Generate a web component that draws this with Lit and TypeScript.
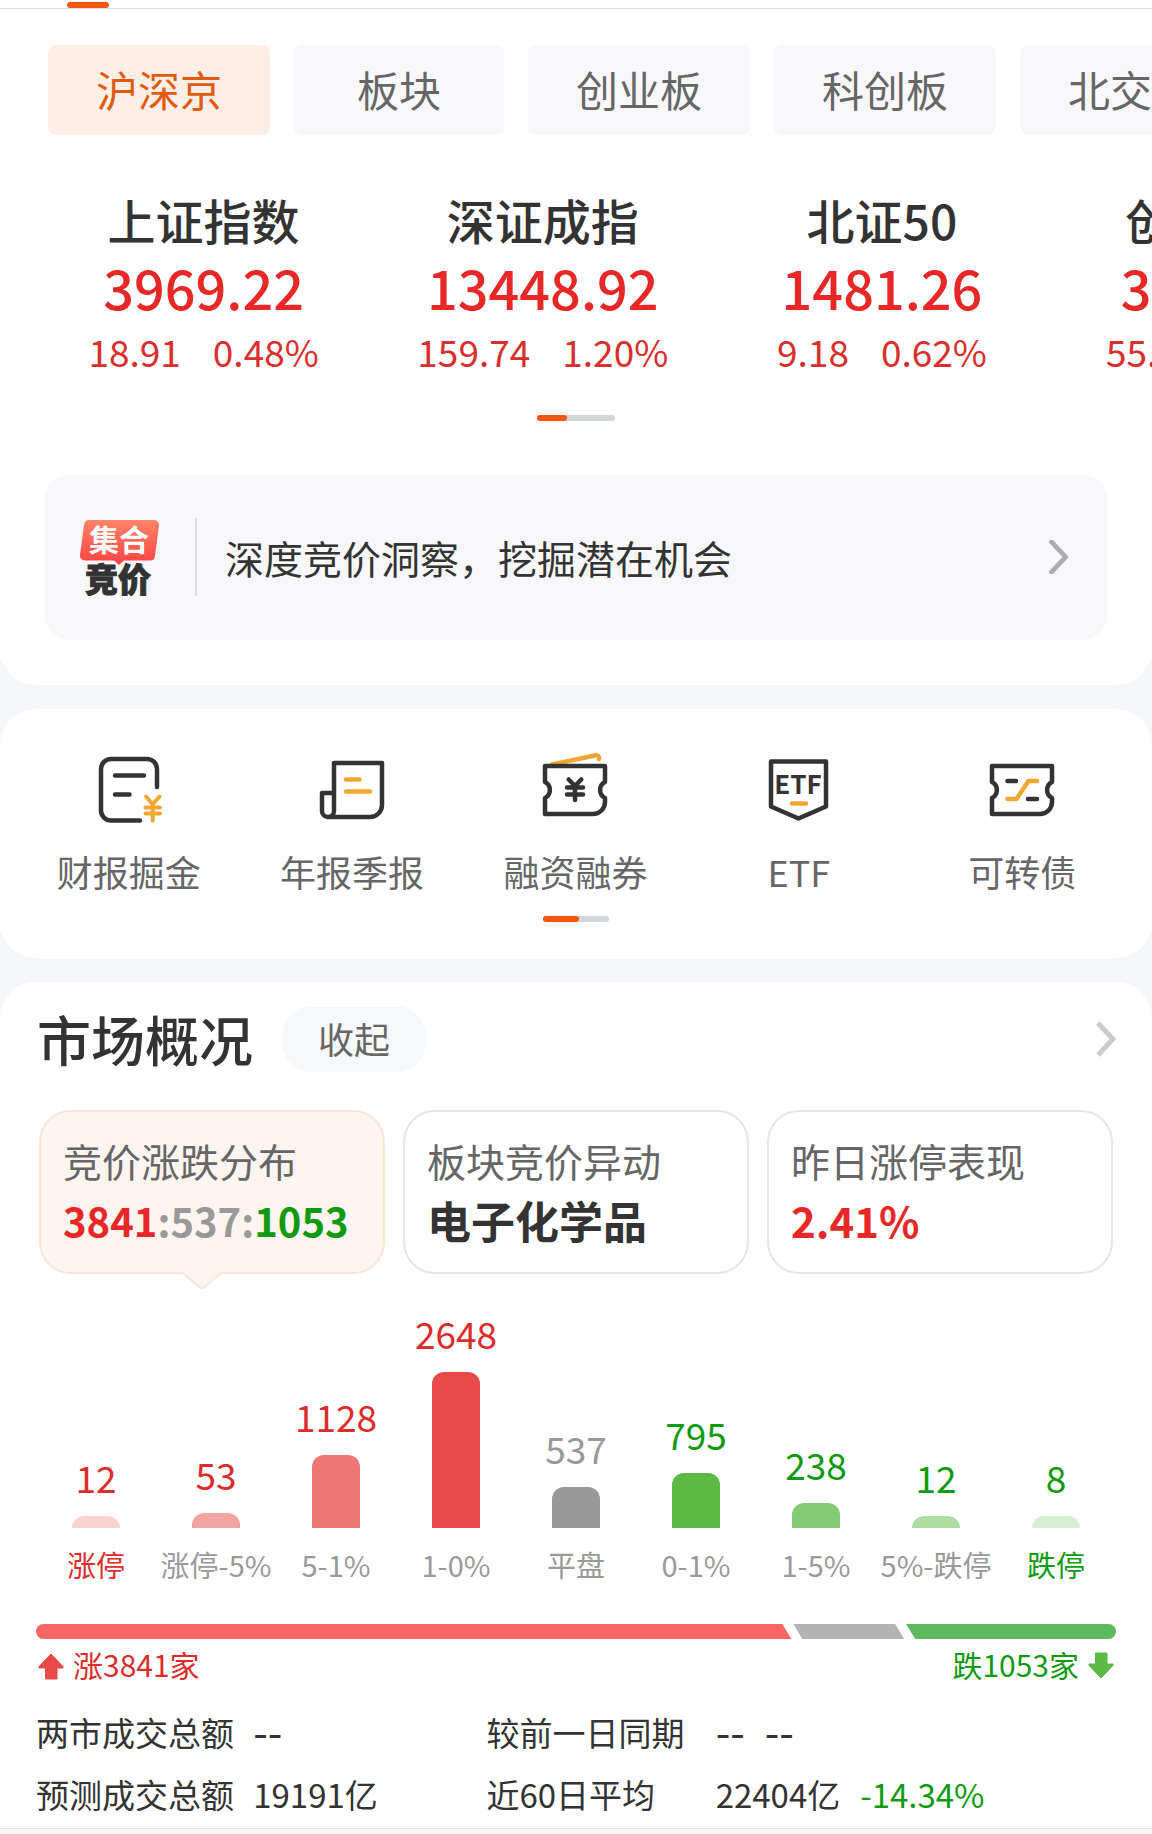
import { LitElement, html, css, svg } from "lit";
import { customElement, state } from "lit/decorators.js";
import { classMap } from "lit/directives/class-map.js";
import { styleMap } from "lit/directives/style-map.js";

const BOARDS = ["沪深京", "板块", "创业板", "科创板", "北交所"];

const INDICES = [
  { name: "上证指数", value: "3969.22", change: "18.91", rate: "0.48%" },
  { name: "深证成指", value: "13448.92", change: "159.74", rate: "1.20%" },
  { name: "北证50", value: "1481.26", change: "9.18", rate: "0.62%" },
  { name: "创业板指", value: "3200.00", change: "55.00", rate: "1.70%" },
];

const TICKET = "M6 16H66V32a9 9 0 0 0 0 16V52a12 12 0 0 1-12 12H6V48a9 9 0 0 0 0-16Z";

const ENTRIES = [
  {
    label: "财报掘金",
    icon: svg`
      <g class="ink"><path d="M64 37V19a10 10 0 0 0-10-10H18a10 10 0 0 0-10 10v41.500a10 10 0 0 0 10 10H47M22 25.500H51M22 44.500H36.500"/></g>
      <g class="accent thin"><path d="M53 46.500l6.700 7.800 6.800-7.800M59.700 54.500V70.500M52.500 57.500H67M52.500 63.500H67"/></g>`,
  },
  {
    label: "年报季报",
    icon: svg`
      <g class="ink"><path d="M18 13H66V55a12 12 0 0 1-12 12H12a6 6 0 0 1-6-6V43H18M18 13V61a6 6 0 0 1-6 6"/></g>
      <g class="accent"><path d="M30 29.500H43.500M30 41.500H54"/></g>`,
  },
  {
    label: "融资融券",
    icon: svg`
      <g class="accent"><path d="M13 14.500L57 5.300q3-.4 3 3.700"/></g>
      <g class="ink"><path d=${TICKET}/></g>
      <g class="ink"><path d="M29.700 29.500l6.300 6.500 6.300-6.500M36 36V50M28 37.500H44M28 44.500H44"/></g>`,
  },
  {
    label: "ETF",
    icon: svg`
      <g class="ink"><path d="M8 11.500H63V56.500L35.500 68.500 8 56.500Z"/></g>
      <text class="mark" x="35" y="44" text-anchor="middle">ETF</text>
      <g class="accent"><path d="M29 53.500H43"/></g>`,
  },
  {
    label: "可转债",
    icon: svg`
      <g class="ink"><path d=${TICKET}/></g>
      <g class="ink"><path d="M21.500 31H30M42 49H51"/></g>
      <g class="accent"><path d="M21.500 49H30.500L42.500 31H51"/></g>`,
  },
];

const BARS = [
  { count: 12, label: "涨停", height: 12, tone: "rise", fill: "#f9d2d2", strong: true },
  { count: 53, label: "涨停-5%", height: 15, tone: "rise", fill: "#f3a5a5", strong: false },
  { count: 1128, label: "5-1%", height: 73, tone: "rise", fill: "#ed7777", strong: false },
  { count: 2648, label: "1-0%", height: 156, tone: "rise", fill: "#e84a4a", strong: false },
  { count: 537, label: "平盘", height: 41, tone: "flat", fill: "#999999", strong: false },
  { count: 795, label: "0-1%", height: 55, tone: "fall", fill: "#5cb944", strong: false },
  { count: 238, label: "1-5%", height: 25, tone: "fall", fill: "#84cb76", strong: false },
  { count: 12, label: "5%-跌停", height: 12, tone: "fall", fill: "#aedda4", strong: false },
  { count: 8, label: "跌停", height: 12, tone: "fall", fill: "#d6eed2", strong: true },
];

@customElement("app-root")
export class AppRoot extends LitElement {
  @state() private board = 0;
  @state() private panel = 0;

  static styles = css`
    :host {
      display: block;
      min-height: 100vh;
      overflow: hidden;
      background: #f6f7fa;
      color: #333;
      font-family: "Noto Sans CJK SC", "Noto Sans", sans-serif;
    }
    * { box-sizing: border-box; }
    button { font: inherit; border: 0; margin: 0; cursor: pointer; }
    a { color: inherit; text-decoration: none; }
    h2, p, dl, dd, dt, ul { margin: 0; padding: 0; }
    svg { display: block; flex: none; }

    .sheet { background: #fff; border-radius: 36px; overflow: hidden; }
    .sheet + .sheet { margin-top: 24px; }
    .sheet.top { border-radius: 0 0 36px 36px; padding-bottom: 45px; }
    .sheet.last { border-radius: 36px 36px 0 0; border-bottom: 1px solid #e2e3e5; }

    .strip { display: flex; align-items: flex-end; height: 9px; padding-left: 67px; border-bottom: 1px solid #dedede; }
    .strip-mark { width: 42px; height: 6px; border-radius: 3px; background: #f5560a; }

    .boards { display: flex; gap: 24px; padding: 36px 0 0 48px; }
    .board { flex: none; min-width: 210px; height: 90px; padding: 0 48px 2px; border-radius: 8px; background: #f8f8fa; color: #666; font-size: 42px; line-height: 60px; }
    .board.on { background: #ffeee6; color: #e05a10; }

    .indices { display: flex; padding: 50px 0 0 34px; }
    .index { flex: 0 0 30.34%; text-align: center; white-space: nowrap; }
    .index-name { font-size: 48px; line-height: 68px; font-weight: 500; }
    .index-value { font-size: 54px; line-height: 68px; font-weight: 500; color: #e82727; }
    .index-move { display: flex; justify-content: center; gap: 32px; margin-top: 2px; font-size: 37px; line-height: 56px; color: #d92f2d; }

    .pager { display: flex; width: 78px; height: 6px; margin: 36px auto 0; border-radius: 3px; background: #d3d6d9; }
    .pager-on { width: 30px; border-radius: 3px; background: #f5560a; }
    .pager.short { width: 66px; margin-top: 17px; }
    .pager.short .pager-on { width: 36px; }

    .banner { display: flex; align-items: center; height: 165px; margin: 54px 45px 0; padding: 0 38px 2px 33px; border-radius: 24px; background: #f8f8fa; }
    .banner-line { width: 2px; height: 78px; margin: 0 28px 0 34px; background: #dcdcde; }
    .banner-text { flex: 1; font-size: 39px; line-height: 56px; }
    .logo-top { font-size: 30px; font-weight: 700; fill: #fff; }
    .logo-bottom { font-size: 33px; font-weight: 900; fill: #333; stroke: #333; stroke-width: 1; }

    .entries { display: grid; grid-template-columns: repeat(5, 1fr); padding: 41px 18px 0 17px; }
    .entry { display: flex; flex-direction: column; align-items: center; font-size: 36px; line-height: 56px; color: #666; }
    .entry svg { margin-bottom: 17px; }
    .ink, .accent { fill: none; stroke: #333; stroke-width: 4.5; stroke-linecap: round; stroke-linejoin: round; }
    .accent { stroke: #f2a735; }
    .accent.thin { stroke-width: 4; }
    .mark { font-size: 26px; font-weight: 700; fill: #333; }
    .sheet.mid { padding-bottom: 36px; }

    .head { display: flex; align-items: center; padding: 24px 36px 0 37px; }
    .title { font-size: 54px; line-height: 66px; font-weight: 500; }
    .fold { height: 66px; margin-left: 29px; padding: 0 36px 2px; border-radius: 30px; background: #f7f8fa; color: #666; font-size: 36px; line-height: 56px; }
    .more { margin-left: auto; }

    .panels { display: grid; grid-template-columns: repeat(3, 1fr); gap: 18px; padding: 38px 39px 0; }
    .panel { position: relative; display: flex; flex-direction: column; justify-content: center; height: 164px; padding: 0 22px 4px; border: 2px solid #e6e6e6; border-radius: 32px; background: #fff; color: #333; text-align: left; white-space: nowrap; }
    .panel.on { background: #fff5f0; border-color: #fce4d9; }
    .panel-label { font-size: 39px; line-height: 60px; color: #666; }
    .panel-value { font-size: 44px; line-height: 60px; font-weight: 700; }
    .panel-value.ratio { font-size: 40px; }
    .panel-value.percent { font-size: 42px; }
    .panel .rise { color: #e82727; }
    .tail { position: absolute; left: 141px; top: 160px; }

    .rise { color: #dc2c2b; }
    .fall { color: #109a10; }
    .flat { color: #999; }

    .bars { display: grid; grid-template-columns: repeat(9, 1fr); align-items: end; height: 310px; padding: 0 36px; }
    .bar-col { display: flex; flex-direction: column; align-items: center; white-space: nowrap; }
    .bar-count { margin-bottom: 11px; font-size: 37px; line-height: 56px; }
    .bar { width: 48px; border-radius: 12px 12px 0 0; }
    .bar-label { margin-top: 16px; font-size: 29px; line-height: 40px; color: #999; }
    .bar-label.rise { color: #dc2c2b; }
    .bar-label.fall { color: #109a10; }

    .share { display: flex; gap: 2px; height: 15px; margin: 40px 36px 0; }
    .share-rise { flex: 702 0 0; border-radius: 8px 0 0 8px; background: #f86565; clip-path: polygon(0 0, calc(100% - 9px) 0, 100% 100%, 0 100%); }
    .share-flat { flex: 103 0 0; background: #b3b3b3; clip-path: polygon(0 0, calc(100% - 9px) 0, 100% 100%, 9px 100%); }
    .share-fall { flex: 195 0 0; border-radius: 0 8px 8px 0; background: #5cba5c; clip-path: polygon(0 0, 100% 0, 100% 100%, 9px 100%); }

    .totals { display: flex; justify-content: space-between; margin: 5px 37px 0; font-size: 30px; line-height: 40px; }
    .total { display: flex; align-items: center; gap: 8px; }
    .total svg { margin-top: 4px; }

    .stats { display: grid; grid-template-columns: 217fr 233fr 229fr 400fr; padding: 17px 36px 3px; font-size: 33px; line-height: 62px; white-space: nowrap; }
    .stats dd { display: flex; gap: 20px; }
    .stats .blank { font-size: 42px; line-height: 58px; }
  `;

  private chevron(width: number, height: number, color: string, cap: "round" | "butt") {
    return html`<svg width=${width} height=${height} viewBox="0 0 21 36" aria-hidden="true">
      <path d="M3 2L18 18 3 34" fill="none" stroke=${color} stroke-width="5" stroke-linecap=${cap} />
    </svg>`;
  }

  render() {
    return html`
      <section class="sheet top">
        <div class="strip"><span class="strip-mark"></span></div>
        <nav class="boards">
          ${BOARDS.map(
            (name, i) => html`<button
              type="button"
              class=${classMap({ board: true, on: i === this.board })}
              @click=${() => (this.board = i)}
            >${name}</button>`
          )}
        </nav>
        <div class="indices">
          ${INDICES.map(
            (it) => html`<div class="index">
              <p class="index-name">${it.name}</p>
              <p class="index-value">${it.value}</p>
              <p class="index-move"><span>${it.change}</span><span>${it.rate}</span></p>
            </div>`
          )}
        </div>
        <div class="pager"><span class="pager-on"></span></div>
        <a class="banner" href="#auction">
          <svg width="83" height="78" viewBox="0 0 83 78">
            <defs>
              <linearGradient id="bubble" x1="0" y1="0" x2="0" y2="1">
                <stop offset="0" stop-color="#ff8468" />
                <stop offset="1" stop-color="#fd4242" />
              </linearGradient>
            </defs>
            <path d="M11 2H76a5 5 0 0 1 5 6L77 38a5 5 0 0 1-5 4.500H46L41 47l-5-4.500H7a5 5 0 0 1-5-6L6 7a5 5 0 0 1 5-5Z" fill="url(#bubble)" />
            <text class="logo-top" x="41" y="33" text-anchor="middle">集合</text>
            <text class="logo-bottom" x="40" y="74" text-anchor="middle">竞价</text>
          </svg>
          <span class="banner-line"></span>
          <span class="banner-text">深度竞价洞察，挖掘潜在机会</span>
          ${this.chevron(21, 34, "#adadaf", "round")}
        </a>
      </section>

      <section class="sheet mid">
        <nav class="entries">
          ${ENTRIES.map(
            (it) => html`<a class="entry" href="#entry">
              <svg width="72" height="76" viewBox="0 0 72 76" aria-hidden="true">${it.icon}</svg>
              <span>${it.label}</span>
            </a>`
          )}
        </nav>
        <div class="pager short"><span class="pager-on"></span></div>
      </section>

      <section class="sheet last">
        <div class="head">
          <h2 class="title">市场概况</h2>
          <button type="button" class="fold">收起</button>
          <a class="more" href="#market" aria-label="市场概况">${this.chevron(21, 36, "#cccccc", "butt")}</a>
        </div>
        <div class="panels">
          ${this.panelCard(0, "竞价涨跌分布", html`<span class="panel-value ratio"><span class="rise">3841</span><span class="flat">:537:</span><span class="fall">1053</span></span>`)}
          ${this.panelCard(1, "板块竞价异动", html`<span class="panel-value">电子化学品</span>`)}
          ${this.panelCard(2, "昨日涨停表现", html`<span class="panel-value percent rise">2.41%</span>`)}
        </div>
        <div class="bars">
          ${BARS.map(
            (b) => html`<div class="bar-col">
              <span class="bar-count ${b.tone}">${b.count}</span>
              <span class="bar" style=${styleMap({ height: `${b.height}px`, background: b.fill })}></span>
              <span class="bar-label ${b.strong ? b.tone : ""}">${b.label}</span>
            </div>`
          )}
        </div>
        <div class="share">
          <span class="share-rise"></span><span class="share-flat"></span><span class="share-fall"></span>
        </div>
        <div class="totals">
          <span class="total rise">
            <svg width="28" height="28" viewBox="0 0 28 28" aria-hidden="true"><path d="M14 2L26 14.500V16H20V27H8.500V16H2V14.500Z" fill="#e84a4a" stroke="#e84a4a" stroke-linejoin="round" /></svg>
            涨3841家
          </span>
          <span class="total fall">
            跌1053家
            <svg width="28" height="28" viewBox="0 0 28 28" aria-hidden="true"><path d="M14 26L26 13.500V12H20V1H8.500V12H2V13.500Z" fill="#5cb944" stroke="#5cb944" stroke-linejoin="round" /></svg>
          </span>
        </div>
        <dl class="stats">
          <dt>两市成交总额</dt><dd class="blank">--</dd>
          <dt>较前一日同期</dt><dd class="blank"><span>--</span><span>--</span></dd>
          <dt>预测成交总额</dt><dd>19191亿</dd>
          <dt>近60日平均</dt><dd><span>22404亿</span><span class="fall">-14.34%</span></dd>
        </dl>
      </section>
    `;
  }

  private panelCard(index: number, label: string, value: unknown) {
    const on = index === this.panel;
    return html`<button type="button" class=${classMap({ panel: true, on })} @click=${() => (this.panel = index)}>
      <span class="panel-label">${label}</span>
      ${value}
      ${on
        ? html`<svg class="tail" width="40" height="18" viewBox="0 0 40 18" aria-hidden="true">
            <path d="M0 0L1 1L17 15q3 2 6 0L39 1L40 0Z" fill="#fff5f0" />
            <path d="M1 1L17 15q3 2 6 0L39 1" fill="none" stroke="#fce4d9" stroke-width="2" />
          </svg>`
        : null}
    </button>`;
  }
}
